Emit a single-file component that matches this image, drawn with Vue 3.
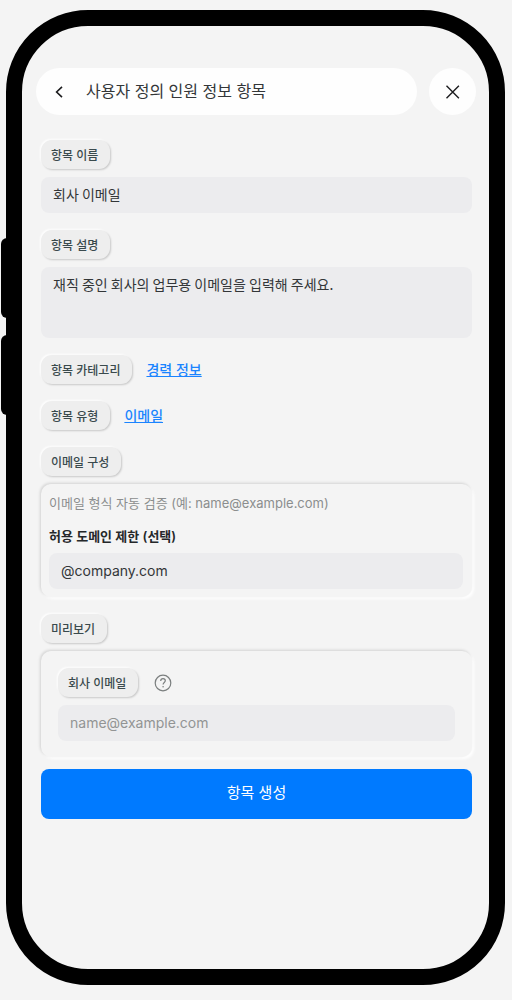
<script setup>
import { ref } from 'vue'

const name = ref('회사 이메일')
const description = ref('재직 중인 회사의 업무용 이메일을 입력해 주세요.')
const domain = ref('@company.com')
const preview = ref('')
</script>

<template>
  <div class="stage">
    <div class="phone">
      <span class="side-key side-key-up"></span>
      <span class="side-key side-key-down"></span>

      <header class="topbar">
        <div class="title-pill">
          <button class="icon-button back" type="button" aria-label="뒤로">
            <svg width="20" height="20" viewBox="0 0 20 20" fill="none" stroke="#1c1c1e" stroke-width="1.6">
              <path d="M12 4.8 6.6 10l5.4 5.2" />
            </svg>
          </button>
          <h1 class="title">사용자 정의 인원 정보 항목</h1>
        </div>
        <button class="icon-button close" type="button" aria-label="닫기">
          <svg width="20" height="20" viewBox="0 0 20 20" fill="none" stroke="#1c1c1e" stroke-width="1.4">
            <path d="M3.5 3.8l12.4 12.4M15.9 3.8 3.5 16.2" />
          </svg>
        </button>
      </header>

      <form class="form" @submit.prevent>
        <div class="group">
          <label class="tag" for="item-name">항목 이름</label>
          <input id="item-name" v-model="name" class="field korean" type="text" />
        </div>

        <div class="group">
          <label class="tag" for="item-description">항목 설명</label>
          <textarea id="item-description" v-model="description" class="field korean area"></textarea>
        </div>

        <div class="row">
          <span class="tag">항목 카테고리</span>
          <a class="link" href="#category">경력 정보</a>
        </div>

        <div class="row">
          <span class="tag">항목 유형</span>
          <a class="link" href="#type">이메일</a>
        </div>

        <section class="group">
          <span class="tag">이메일 구성</span>
          <div class="card">
            <p class="hint">이메일 형식 자동 검증 (예: name@example.com)</p>
            <label class="sub-label" for="domain">허용 도메인 제한 (선택)</label>
            <input id="domain" v-model="domain" class="field" type="text" />
          </div>
        </section>

        <section class="group">
          <span class="tag">미리보기</span>
          <div class="card card-preview">
            <div class="row row-help">
              <label class="tag" for="preview">회사 이메일</label>
              <button class="icon-button help" type="button" aria-label="도움말">
                <svg width="18" height="18" viewBox="0 0 18 18" fill="none" stroke="#7b7f7f" stroke-width="1.2">
                  <circle cx="9" cy="9" r="7.8" />
                  <path d="M6.7 7.1c0-1.5 1-2.4 2.3-2.4s2.3.9 2.3 2.1c0 1.7-2.2 1.8-2.2 3.7" />
                  <circle cx="9.1" cy="12.8" r=".8" fill="#7b7f7f" stroke="none" />
                </svg>
              </button>
            </div>
            <input id="preview" v-model="preview" class="field" type="email" placeholder="name@example.com" />
          </div>
        </section>

        <button class="submit" type="submit">항목 생성</button>
      </form>
    </div>
  </div>
</template>

<style>
body {
  background: #f4f4f4;
}
</style>

<style scoped>
.stage,
.stage * {
  box-sizing: border-box;
}

.stage {
  min-height: 100vh;
  display: flex;
  padding: 10px 7px 15px 6px;
  font-family: Inter, "Noto Sans CJK KR", sans-serif;
  color: #333638;
}

.phone {
  position: relative;
  flex: 1;
  min-width: 0;
  padding: 42px 13px 24px 14px;
  border: 16px solid #000;
  border-radius: 82px;
  background: #f4f4f4;
}

.side-key {
  position: absolute;
  left: -21px;
  width: 12px;
  height: 80px;
  border-radius: 8px;
  background: #000;
}

.side-key-up {
  top: 212px;
}

.side-key-down {
  top: 309px;
}

.topbar {
  display: flex;
  gap: 12px;
}

.title-pill {
  flex: 1;
  min-width: 0;
  display: flex;
  align-items: center;
  gap: 16px;
  height: 47px;
  padding: 0 14px;
  border-radius: 24px;
  background: #fefefe;
}

.title {
  margin: 0;
  padding-bottom: 2px;
  font-size: 16px;
  font-weight: 400;
  line-height: 24px;
}

.icon-button {
  display: flex;
  align-items: center;
  justify-content: center;
  padding: 0;
  border: 0;
  background: none;
}

.back {
  width: 20px;
  height: 20px;
}

.close {
  flex: none;
  width: 47px;
  height: 47px;
  border-radius: 50%;
  background: #fefefe;
}

.help {
  width: 18px;
  height: 18px;
}

.form {
  display: flex;
  flex-direction: column;
  gap: 17px;
  padding: 25px 4px 0 5px;
}

.group {
  display: flex;
  flex-direction: column;
  align-items: flex-start;
  gap: 8px;
}

.row {
  display: flex;
  align-items: center;
  gap: 14px;
}

.row-help {
  gap: 16px;
}

.tag {
  padding: 7px 12px 4px 10px;
  border-radius: 11px;
  background: #eee;
  box-shadow: 1px 1px 2px rgba(0, 0, 0, 0.18), -1px -1px 2px #fff;
  color: #3a4a4d;
  font-size: 12px;
  font-weight: 500;
  line-height: 18px;
}

.field {
  display: block;
  width: 100%;
  height: 36px;
  padding: 0 12px 2px;
  border: 0;
  border-radius: 8px;
  outline: 0;
  background: #ececee;
  color: #333638;
  font-family: inherit;
  font-size: 14px;
  line-height: 20px;
}

.field.korean {
  font-family: "Noto Sans CJK KR", sans-serif;
}

.field::placeholder {
  color: #929494;
  opacity: 1;
}

.area {
  height: 71px;
  padding: 7px 12px;
  resize: none;
}

.link {
  color: #1a84ff;
  font-size: 14px;
  font-weight: 500;
  line-height: 20px;
  text-decoration: underline;
}

.card {
  width: 100%;
  padding: 9px 9px 8px 8px;
  border-radius: 10px;
  background: #f4f4f4;
  box-shadow: -1px -1px 3px rgba(0, 0, 0, 0.14), 2px 2px 3px #fff;
}

.hint {
  margin: 0;
  color: #8b8e8e;
  font-size: 13px;
  line-height: 20px;
}

.sub-label {
  display: block;
  margin: 13px 0 7px;
  color: #25282a;
  font-size: 13px;
  font-weight: 600;
  line-height: 20px;
}

.card-preview {
  display: flex;
  flex-direction: column;
  gap: 8px;
  padding: 17px 17px 16px;
}

.submit {
  width: 100%;
  height: 50px;
  margin-top: -5px;
  padding: 0 0 3px;
  border: 0;
  border-radius: 8px;
  background: #007aff;
  color: #fff;
  font-family: inherit;
  font-size: 15px;
  font-weight: 400;
  line-height: 20px;
}
</style>
